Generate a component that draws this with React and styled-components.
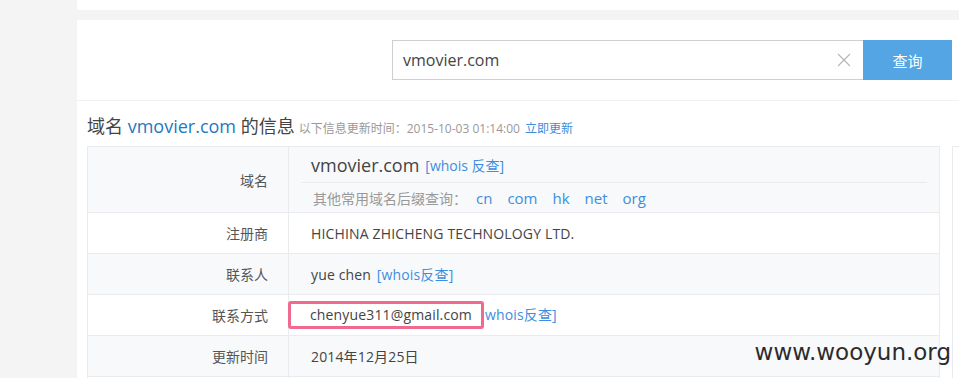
import React from "react";
import styled, { createGlobalStyle } from "styled-components";

const GlobalStyle = createGlobalStyle`
  html, body {
    margin: 0;
    padding: 0;
    background: #f4f4f4;
    overflow: hidden;
  }
  body {
    font-family: "Open Sans", "Noto Sans CJK SC", sans-serif;
    color: #444;
  }
`;

const Page = styled.div`
  display: flex;
  height: 378px;
  position: relative;
  overflow: hidden;
`;

const Sidebar = styled.div`
  width: 77px;
  flex-shrink: 0;
  background: #f4f4f4;
`;

const Main = styled.div`
  flex: 1;
  display: flex;
  flex-direction: column;
  gap: 10px;
  min-height: 0;
`;

const TopStrip = styled.div`
  height: 10px;
  flex-shrink: 0;
  background: #fff;
`;

const Panel = styled.div`
  flex: 1;
  min-height: 0;
  background: #fff;
`;

const SearchBar = styled.div`
  display: flex;
  justify-content: flex-end;
  padding: 20px 7px 20px 0;
  border-bottom: 1px solid #f2f2f2;
`;

const SearchBox = styled.div`
  width: 460px;
  height: 38px;
  border: 1px solid #cfcfcf;
  border-right: none;
  display: flex;
  align-items: center;
  padding-left: 10px;
  font-size: 16px;
  color: #444;
`;

const SearchText = styled.span`
  flex: 1;
`;

const ClearIcon = styled.svg`
  width: 14px;
  height: 14px;
  margin-right: 12px;
`;

const SearchButton = styled.div`
  width: 89px;
  height: 40px;
  background: #53a6e3;
  color: #fff;
  font-size: 15px;
  display: flex;
  align-items: center;
  justify-content: center;
  padding-top: 1px;
  box-sizing: border-box;
`;

const Content = styled.div`
  padding-left: 10px;
`;

const Heading = styled.div`
  padding-top: 12px;
  margin-bottom: 4px;
  line-height: 26px;
  font-size: 18px;
  color: #444;
  white-space: nowrap;
`;

const HeadDomain = styled.span`
  color: #1f78c4;
`;

const HeadNote = styled.span`
  font-size: 12px;
  color: #999;
  margin-left: 4px;
`;

const Link = styled.span`
  color: ${(p) => p.$color || "#3d8ee0"};
  font-size: ${(p) => p.$size || "inherit"};
  margin-left: ${(p) => p.$gap || "0"};
`;

const BodyRow = styled.div`
  display: flex;
  align-items: flex-start;
`;

const Table = styled.table`
  width: 853px;
  border-collapse: collapse;
  border: 1px solid #e9ebee;
  font-size: 14px;
`;

const Row = styled.tr`
  background: ${(p) => (p.$alt ? "#f8f9fb" : "#fff")};
`;

const Label = styled.td`
  width: 180px;
  padding: 0 20px 0 0;
  text-align: right;
  color: #555;
  border: 1px solid #e9ebee;
  height: ${(p) => p.$h || 40}px;
`;

const Value = styled.td`
  padding: 0 0 0 22px;
  border: 1px solid #e9ebee;
  color: #444;
  white-space: nowrap;
  letter-spacing: 0.15px;
`;

const DomainCell = styled.td`
  padding: 0 12px;
  border: 1px solid #e9ebee;
`;

const DomainLine = styled.div`
  height: 35px;
  display: flex;
  align-items: center;
  padding-left: 10px;
  border-bottom: 1px solid #e9ebee;
  font-size: 18px;
  color: #444;
`;

const SuffixLine = styled.div`
  height: 29px;
  display: flex;
  align-items: center;
  padding-left: 12px;
  font-size: 14px;
  color: #999;
`;

const Highlight = styled.span`
  display: inline-block;
  margin-left: -23px;
  padding: 1px 9px 1px 19px;
  border: 3px solid #f06a90;
  border-radius: 3px;
  line-height: 20px;
`;

const SidePanel = styled.div`
  margin-left: 12px;
  flex: 1;
  height: 240px;
  border-left: 1px solid #e9ebee;
  border-top: 1px solid #e9ebee;
`;

const Watermark = styled.div`
  position: absolute;
  right: 8px;
  bottom: 13px;
  font-family: "DejaVu Sans", sans-serif;
  font-size: 23px;
  color: #2b2b2b;
`;

const suffixes = ["cn", "com", "hk", "net", "org"];

export default function App() {
  return (
    <Page>
      <GlobalStyle />
      <Sidebar />
      <Main>
        <TopStrip />
        <Panel>
          <SearchBar>
            <SearchBox>
              <SearchText>vmovier.com</SearchText>
              <ClearIcon viewBox="0 0 14 14">
                <path d="M1 1 L13 13 M13 1 L1 13" stroke="#b5b5b5" strokeWidth="1.1" fill="none" />
              </ClearIcon>
            </SearchBox>
            <SearchButton>查询</SearchButton>
          </SearchBar>
          <Content>
            <Heading>
              域名 <HeadDomain>vmovier.com</HeadDomain> 的信息
              <HeadNote>以下信息更新时间：2015-10-03 01:14:00</HeadNote>
              <Link $size="12px" $gap="5px">立即更新</Link>
            </Heading>
            <BodyRow>
              <Table>
                <tbody>
                  <Row $alt>
                    <Label $h={65}>域名</Label>
                    <DomainCell>
                      <DomainLine>
                        vmovier.com
                        <Link $size="14px" $gap="6px">[whois 反查]</Link>
                      </DomainLine>
                      <SuffixLine>
                        其他常用域名后缀查询：
                        {suffixes.map((s, i) => (
                          <Link key={s} $size="15px" $gap={i === 0 ? "9px" : "15px"}>
                            {s}
                          </Link>
                        ))}
                      </SuffixLine>
                    </DomainCell>
                  </Row>
                  <Row>
                    <Label>注册商</Label>
                    <Value>HICHINA ZHICHENG TECHNOLOGY LTD.</Value>
                  </Row>
                  <Row $alt>
                    <Label>联系人</Label>
                    <Value>
                      yue chen <Link $gap="2px">[whois反查]</Link>
                    </Value>
                  </Row>
                  <Row>
                    <Label>联系方式</Label>
                    <Value>
                      <Highlight>chenyue311@gmail.com</Highlight>
                      <Link $gap="1px">whois反查]</Link>
                    </Value>
                  </Row>
                  <Row $alt>
                    <Label>更新时间</Label>
                    <Value>2014年12月25日</Value>
                  </Row>
                  <Row>
                    <Label />
                    <Value />
                  </Row>
                </tbody>
              </Table>
              <SidePanel />
            </BodyRow>
          </Content>
        </Panel>
      </Main>
      <Watermark>www.wooyun.org</Watermark>
    </Page>
  );
}
